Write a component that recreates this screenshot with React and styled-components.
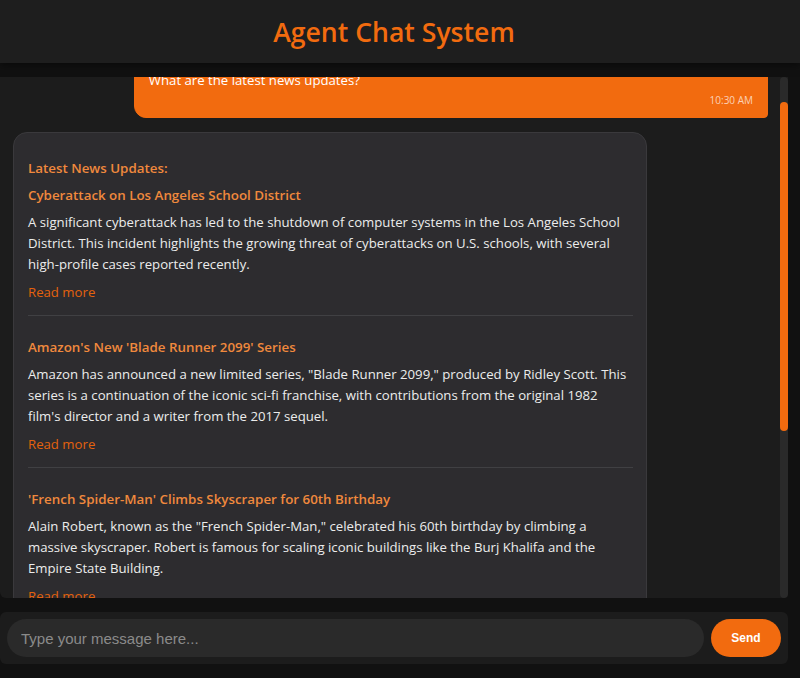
import React, { useLayoutEffect, useRef, useState } from "react";
import styled, { createGlobalStyle } from "styled-components";

const GlobalStyle = createGlobalStyle`
  html, body {
    margin: 0;
    padding: 0;
    background: #111111;
    font-family: "Open Sans", "Noto Sans", sans-serif;
  }
  * { box-sizing: border-box; }
`;

const Page = styled.div`
  display: flex;
  flex-direction: column;
  height: 100vh;
`;

const Header = styled.header`
  height: 63px;
  flex-shrink: 0;
  display: flex;
  align-items: center;
  justify-content: center;
  padding-right: 12px;
  background: #1e1e1e;
  box-shadow: 0 2px 8px rgba(0, 0, 0, 0.5);
`;

const Title = styled.h1`
  margin: 0;
  color: #f26b0f;
  font-size: 26.6px;
  font-weight: 600;
`;

const Main = styled.main`
  flex: 1;
  min-height: 0;
  display: flex;
  flex-direction: column;
  gap: 14px;
  padding: 14px 12px 14px 0;
`;

const ChatFrame = styled.div`
  position: relative;
  flex: 1;
  min-height: 0;
  display: flex;
  background: #1c1c1c;
  border-radius: 0 0 6px 6px;
`;

const ChatWindow = styled.div`
  flex: 1;
  min-height: 0;
  overflow-y: auto;
  scrollbar-width: none;
  padding: 20px 20px 40px 13px;
  display: flex;
  flex-direction: column;
  gap: 14px;

  &::-webkit-scrollbar {
    display: none;
  }
`;

const ScrollTrack = styled.div`
  position: absolute;
  top: 0;
  bottom: 0;
  right: 0;
  width: 8px;
  background: #2a2a2a;
  border-radius: 4px;
`;

const ScrollThumb = styled.div`
  position: absolute;
  left: 0;
  right: 0;
  background: #f26b0f;
  border-radius: 4px;
`;

const Bubble = styled.div`
  width: 84%;
  flex-shrink: 0;
  align-self: ${({ $user }) => ($user ? "flex-end" : "flex-start")};
  background: ${({ $user }) => ($user ? "#f26b0f" : "#2d2c2f")};
  border: 1px solid ${({ $user }) => ($user ? "#f26b0f" : "#3a393c")};
  border-radius: ${({ $user }) => ($user ? "12px 12px 4px 12px" : "14px 14px 14px 4px")};
  padding: ${({ $user }) => ($user ? "11px 14px 10px" : "14px 13px 14px 14px")};
  color: #ececec;
  font-size: 13.2px;
  line-height: 21px;
`;

const UserText = styled.div`
  color: #ffffff;
`;

const Time = styled.div`
  text-align: right;
  font-size: 10px;
  line-height: 14px;
  margin-top: 2px;
  color: rgba(255, 255, 255, 0.7);
`;

const NewsHeading = styled.h3`
  margin: 11px 0 6px;
  color: #f0893d;
  font-size: 13.35px;
  font-weight: 600;
  line-height: 21px;
`;

const NewsItem = styled.div`
  padding-bottom: 12px;
  margin-bottom: 21px;
  border-bottom: 1px solid #404043;

  &:last-child {
    border-bottom: none;
    margin-bottom: 0;
  }
`;

const NewsTitle = styled.h4`
  margin: 0 0 6px;
  color: #f0893d;
  font-size: 13.35px;
  font-weight: 600;
  line-height: 21px;
`;

const NewsBody = styled.p`
  margin: 0 0 7px;
  color: #ececec;
`;

const ReadMore = styled.a`
  display: block;
  color: #e4620d;
  text-decoration: none;
`;

const InputBar = styled.form`
  flex-shrink: 0;
  display: flex;
  gap: 7px;
  padding: 7px;
  background: #1c1c1c;
  border-radius: 6px;
`;

const Input = styled.input`
  flex: 1;
  height: 38px;
  border: none;
  outline: none;
  border-radius: 19px;
  background: #2a2a2a;
  color: #eee;
  padding: 0 14px;
  font-family: "Liberation Sans", Arial, sans-serif;
  font-size: 15px;

  &::placeholder {
    color: #8a8a8a;
  }
`;

const SendButton = styled.button`
  width: 70px;
  height: 38px;
  border: none;
  border-radius: 19px;
  background: #f26b0f;
  color: #ffffff;
  font-family: "Liberation Sans", Arial, sans-serif;
  font-weight: 700;
  font-size: 12px;
  cursor: pointer;
`;

const news = [
  {
    title: "Cyberattack on Los Angeles School District",
    body: "A significant cyberattack has led to the shutdown of computer systems in the Los Angeles School District. This incident highlights the growing threat of cyberattacks on U.S. schools, with several high-profile cases reported recently.",
  },
  {
    title: "Amazon's New 'Blade Runner 2099' Series",
    body: "Amazon has announced a new limited series, \"Blade Runner 2099,\" produced by Ridley Scott. This series is a continuation of the iconic sci-fi franchise, with contributions from the original 1982 film's director and a writer from the 2017 sequel.",
  },
  {
    title: "'French Spider-Man' Climbs Skyscraper for 60th Birthday",
    body: "Alain Robert, known as the \"French Spider-Man,\" celebrated his 60th birthday by climbing a massive skyscraper. Robert is famous for scaling iconic buildings like the Burj Khalifa and the Empire State Building.",
  },
  {
    title: "Record Heat Wave Sweeps Across Europe",
    body: "Several European countries have reported record-breaking temperatures this week, prompting health warnings and emergency measures to protect vulnerable residents from the extreme heat. Authorities urge people to stay hydrated and avoid the midday sun.",
  },
];

export default function App() {
  const chatRef = useRef(null);
  const [thumb, setThumb] = useState({ top: 0, height: 0 });

  const updateThumb = () => {
    const el = chatRef.current;
    if (!el) return;
    const ratio = el.clientHeight / el.scrollHeight;
    setThumb({
      top: el.scrollTop * ratio,
      height: Math.min(el.clientHeight, el.clientHeight * ratio),
    });
  };

  useLayoutEffect(() => {
    if (chatRef.current) chatRef.current.scrollTop = 39;
    updateThumb();
  }, []);

  return (
    <>
      <GlobalStyle />
      <Page>
        <Header>
          <Title>Agent Chat System</Title>
        </Header>
        <Main>
          <ChatFrame>
            <ChatWindow ref={chatRef} onScroll={updateThumb}>
              <Bubble $user>
                <UserText>What are the latest news updates?</UserText>
                <Time>10:30 AM</Time>
              </Bubble>
              <Bubble>
                <NewsHeading>Latest News Updates:</NewsHeading>
                {news.map((item) => (
                  <NewsItem key={item.title}>
                    <NewsTitle>{item.title}</NewsTitle>
                    <NewsBody>{item.body}</NewsBody>
                    <ReadMore href="#">Read more</ReadMore>
                  </NewsItem>
                ))}
                <Time>10:30 AM</Time>
              </Bubble>
            </ChatWindow>
            <ScrollTrack>
              <ScrollThumb style={{ top: thumb.top, height: thumb.height }} />
            </ScrollTrack>
          </ChatFrame>
          <InputBar onSubmit={(e) => e.preventDefault()}>
            <Input placeholder="Type your message here..." />
            <SendButton type="submit">Send</SendButton>
          </InputBar>
        </Main>
      </Page>
    </>
  );
}
